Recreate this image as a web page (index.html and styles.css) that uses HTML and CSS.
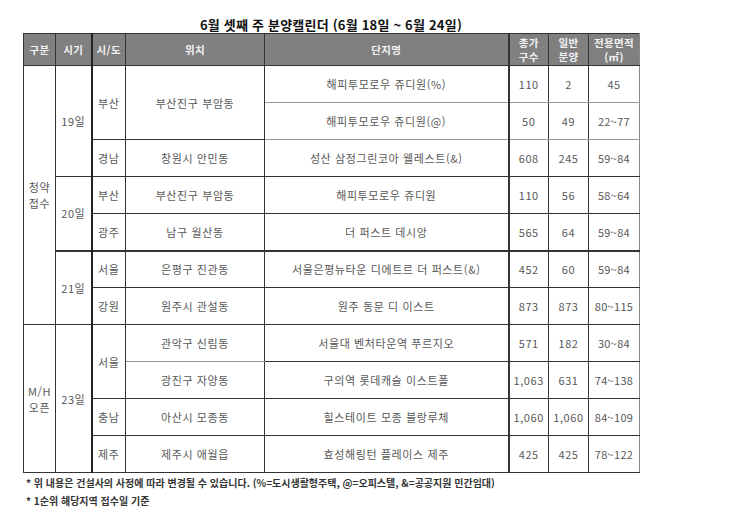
FILE: index.html
```html
<!DOCTYPE html>
<html lang="ko">
<head>
<meta charset="utf-8">
<link rel="stylesheet" href="styles.css">
</head>
<body>
<div class="page">
  <h1 class="title">6월 셋째 주 분양캘린더 (6월 18일 ~ 6월 24일)</h1>
  <table class="cal">
    <colgroup>
      <col class="c1"><col class="c2"><col class="c3"><col class="c4"><col class="c5"><col class="c6"><col class="c7"><col class="c8">
    </colgroup>
    <thead>
      <tr>
        <th>구분</th><th>시기</th><th class="sido">시/도</th><th class="loc">위치</th><th class="name">단지명</th><th class="num">총가<br>구수</th><th>일반<br>분양</th><th class="area">전용면적<br>(㎡)</th>
      </tr>
    </thead>
    <tbody>
      <tr>
        <td rowspan="7" class="two">청약<br>접수</td>
        <td rowspan="3">19일</td>
        <td rowspan="2" class="sido">부산</td>
        <td rowspan="2" class="loc">부산진구 부암동</td>
        <td class="name lite-b">해피투모로우 쥬디원(%)</td>
        <td class="num lite-b">110</td><td class="lite-b">2</td><td class="area lite-b">45</td>
      </tr>
      <tr>
        <td class="name lite-b">해피투모로우 쥬디원(@)</td>
        <td class="num lite-b">50</td><td class="lite-b">49</td><td class="area lite-b">22~77</td>
      </tr>
      <tr>
        <td class="sido">경남</td><td class="loc">창원시 안민동</td>
        <td class="name">성산 삼정그린코아 웰레스트(&amp;)</td>
        <td class="num">608</td><td>245</td><td class="area">59~84</td>
      </tr>
      <tr>
        <td rowspan="2">20일</td>
        <td class="sido">부산</td><td class="loc">부산진구 부암동</td>
        <td class="name">해피투모로우 쥬디원</td>
        <td class="num">110</td><td>56</td><td class="area">58~64</td>
      </tr>
      <tr>
        <td class="sido">광주</td><td class="loc">남구 월산동</td>
        <td class="name">더 퍼스트 데시앙</td>
        <td class="num">565</td><td>64</td><td class="area">59~84</td>
      </tr>
      <tr class="thick-t">
        <td rowspan="2">21일</td>
        <td class="sido">서울</td><td class="loc">은평구 진관동</td>
        <td class="name">서울은평뉴타운 디에트르 더 퍼스트(&amp;)</td>
        <td class="num">452</td><td>60</td><td class="area">59~84</td>
      </tr>
      <tr>
        <td class="sido">강원</td><td class="loc">원주시 관설동</td>
        <td class="name">원주 동문 디 이스트</td>
        <td class="num">873</td><td>873</td><td class="area">80~115</td>
      </tr>
      <tr>
        <td rowspan="4" class="two">M/H<br>오픈</td>
        <td rowspan="4">23일</td>
        <td rowspan="2" class="sido">서울</td>
        <td class="loc lite-b">관악구 신림동</td>
        <td class="name">서울대 벤처타운역 푸르지오</td>
        <td class="num">571</td><td>182</td><td class="area">30~84</td>
      </tr>
      <tr>
        <td class="loc">광진구 자양동</td>
        <td class="name">구의역 롯데캐슬 이스트폴</td>
        <td class="num">1,063</td><td>631</td><td class="area">74~138</td>
      </tr>
      <tr>
        <td class="sido">충남</td><td class="loc">아산시 모종동</td>
        <td class="name">힐스테이트 모종 블랑루체</td>
        <td class="num">1,060</td><td>1,060</td><td class="area">84~109</td>
      </tr>
      <tr>
        <td class="sido">제주</td><td class="loc">제주시 애월읍</td>
        <td class="name">효성해링턴 플레이스 제주</td>
        <td class="num">425</td><td>425</td><td class="area">78~122</td>
      </tr>
    </tbody>
  </table>
  <p class="note">* 위 내용은 건설사의 사정에 따라 변경될 수 있습니다. (%=도시생활형주택, @=오피스텔, &amp;=공공지원 민간임대)</p>
  <p class="note">* 1순위 해당지역 접수일 기준</p>
</div>
</body>
</html>
```

FILE: styles.css
```css
html, body {
  margin: 0;
  padding: 0;
  background: #ffffff;
}
.page {
  padding: 17px 0 0 23px;
  width: 616px;
  font-family: "Noto Sans CJK KR", "Noto Sans", sans-serif;
}
.title {
  margin: 0;
  height: 16px;
  line-height: 16px;
  text-align: center;
  font-size: 13px;
  letter-spacing: 0.2px;
  font-weight: bold;
  color: #111;
}
.cal {
  width: 616px;
  border-collapse: collapse;
  table-layout: fixed;
  font-size: 11px;
  letter-spacing: 0.6px;
  color: #585858;
}
.c1 { width: 32px; }
.c2 { width: 36px; }
.c3 { width: 34px; }
.c4 { width: 139px; }
.c5 { width: 244px; }
.c6 { width: 40px; }
.c7 { width: 40px; }
.c8 { width: 51px; }
.cal th, .cal td {
  border: 1px solid #333;
  text-align: center;
  vertical-align: middle;
  padding: 0;
  line-height: 14px;
  white-space: nowrap;
}
.cal th {
  background: #808080;
  color: #f2f2f2;
  font-weight: bold;
  height: 31px;
  font-size: 10.5px;
  letter-spacing: 0.4px;
  line-height: 14px;
}
.cal tbody tr { height: 37px; }
.cal td.two { line-height: 16px; }
.cal .sido { border-left: 2px solid #222; }
.cal .loc { border-left: 1px solid #666; }
.cal .num { border-left: 2px solid #333; }
.cal .area { border-left: 1px solid #999; border-right: 1px solid #888; letter-spacing: 0.3px; }
.cal .lite-b { border-bottom: 1px solid #999; }
.cal tr.thick-t td { border-top: 2px solid #333; }
.note {
  margin: 3px 0 0 3px;
  font-size: 10px;
  font-weight: bold;
  color: #333;
  line-height: 14px;
}
.note + .note { margin-top: 4px; }
```
